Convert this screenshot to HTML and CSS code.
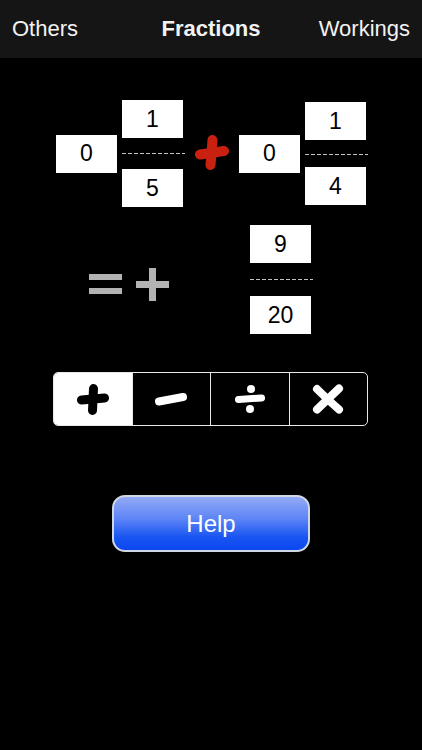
FILE: index.html
```html
<!DOCTYPE html>
<html>
<head>
<meta charset="utf-8">
<link rel="stylesheet" href="styles.css">
</head>
<body>
<header class="nav">
  <span class="nav-left">Others</span>
  <span class="nav-title">Fractions</span>
  <span class="nav-right">Workings</span>
</header>

<section class="sum-row">
  <div class="operand">
    <div class="box">0</div>
    <div class="frac">
      <div class="box">1</div>
      <div class="dash"></div>
      <div class="box">5</div>
    </div>
  </div>
  <div class="op-slot">
    <svg class="red-plus" width="34" height="36" viewBox="0 0 34 36">
      <path d="M17.5 5 C17 14 16.3 22 15.5 30" fill="none" stroke="#c8210f" stroke-width="10" stroke-linecap="round"/>
      <path d="M5 19.5 C12 18.5 20 17.3 29 16" fill="none" stroke="#c8210f" stroke-width="10" stroke-linecap="round"/>
    </svg>
  </div>
  <div class="operand">
    <div class="box">0</div>
    <div class="frac frac-tight">
      <div class="box">1</div>
      <div class="dash"></div>
      <div class="box">4</div>
    </div>
  </div>
</section>

<section class="result-row">
  <div class="result-ops">
    <svg width="33" height="20" viewBox="0 0 33 20">
      <rect x="0" y="0" width="33" height="6" fill="#b3b3b3"/>
      <rect x="0" y="14" width="33" height="6" fill="#b3b3b3"/>
    </svg>
    <svg width="33" height="33" viewBox="0 0 33 33">
      <rect x="0" y="13" width="33" height="7" fill="#b3b3b3"/>
      <rect x="13" y="0" width="7" height="33" fill="#b3b3b3"/>
    </svg>
  </div>
  <div class="frac frac-result">
    <div class="box">9</div>
    <div class="dash"></div>
    <div class="box">20</div>
  </div>
</section>

<section class="segmented">
  <div class="seg seg-active">
    <svg width="32" height="31" viewBox="0 0 32 31">
      <path d="M16.5 4.5 L15.5 26.5" stroke="#000" stroke-width="9" stroke-linecap="round" fill="none"/>
      <path d="M4.5 16 L27.5 14" stroke="#000" stroke-width="9" stroke-linecap="round" fill="none"/>
    </svg>
  </div>
  <div class="seg">
    <svg width="34" height="14" viewBox="0 0 34 14">
      <path d="M5 9.5 L29 5" stroke="#fff" stroke-width="8" stroke-linecap="round" fill="none"/>
    </svg>
  </div>
  <div class="seg">
    <svg width="32" height="30" viewBox="0 0 32 30">
      <circle cx="17" cy="5" r="4" fill="#fff"/>
      <path d="M4.5 15.5 L27.5 14" stroke="#fff" stroke-width="7" stroke-linecap="round" fill="none"/>
      <circle cx="16" cy="25" r="4" fill="#fff"/>
    </svg>
  </div>
  <div class="seg">
    <svg width="34" height="30" viewBox="0 0 34 30">
      <path d="M6 5 Q15 14 28 25.5" stroke="#fff" stroke-width="8" stroke-linecap="round" fill="none"/>
      <path d="M28 4.5 Q18 14 6 25.5" stroke="#fff" stroke-width="8" stroke-linecap="round" fill="none"/>
    </svg>
  </div>
</section>

<div class="help-wrap">
  <button class="help">Help</button>
</div>
</body>
</html>
```

FILE: styles.css
```css
html, body {
  margin: 0;
  padding: 0;
  background: #000;
  font-family: "Liberation Sans", Arial, sans-serif;
  color: #fff;
}

.nav {
  height: 58px;
  background: #151515;
  display: grid;
  grid-template-columns: 1fr auto 1fr;
  align-items: center;
  padding: 0 12px;
  font-size: 22px;
  color: #f2f2f2;
}
.nav-left { justify-self: start; }
.nav-title { justify-self: center; font-weight: bold; }
.nav-right { justify-self: end; }

.box {
  width: 61px;
  height: 38px;
  background: #fff;
  color: #000;
  font-size: 23px;
  display: flex;
  align-items: center;
  justify-content: center;
}

.dash {
  width: 63px;
  height: 1px;
  background: repeating-linear-gradient(90deg, #c4c4c4 0 4px, transparent 4px 6px);
  margin: 15px 0;
}

.frac {
  display: flex;
  flex-direction: column;
  align-items: flex-start;
}
.frac-tight .dash { margin: 14px 0 12px; }

.sum-row {
  display: flex;
  align-items: center;
  padding-left: 56px;
  margin-top: 42px;
}
.operand {
  display: flex;
  align-items: center;
  gap: 5px;
}
.op-slot {
  width: 54px;
  display: flex;
  justify-content: center;
  align-items: center;
  margin-top: -2px;
}

.result-row {
  display: flex;
  align-items: center;
  padding-left: 89px;
  margin-top: 18px;
}
.result-ops {
  display: flex;
  align-items: center;
  gap: 14px;
  margin-top: 9px;
  width: 161px;
}
.frac-result .dash { margin: 16px 0; }

.segmented {
  margin: 38px 0 0 53px;
  width: 315px;
  height: 54px;
  box-sizing: border-box;
  border: 1.5px solid #e8e8e8;
  border-radius: 5px;
  display: flex;
  overflow: hidden;
}
.seg {
  flex: 1;
  display: flex;
  align-items: center;
  justify-content: center;
  border-left: 1.5px solid #e8e8e8;
}
.seg:first-child { border-left: none; }
.seg-active { background: #fff; }

.help-wrap {
  margin: 69px 0 0 112px;
}
.help {
  width: 198px;
  height: 57px;
  box-sizing: border-box;
  border: 2px solid #cfd6e4;
  border-radius: 13px;
  background: linear-gradient(to bottom, #93aaf4 0%, #5f86f6 40%, #1a56f2 75%, #0a47ef 100%);
  color: #fff;
  font-family: "Liberation Sans", Arial, sans-serif;
  font-size: 24px;
  padding: 0;
}
```
